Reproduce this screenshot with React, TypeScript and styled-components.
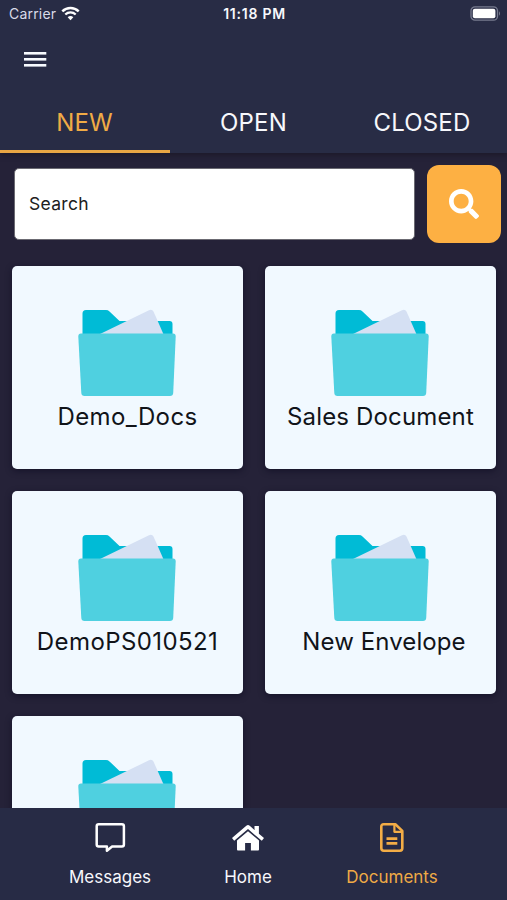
import React from "react";
import styled, { createGlobalStyle } from "styled-components";
import { FaSearch } from "react-icons/fa";

const accent = "#fdb043";

const GlobalStyle = createGlobalStyle`
  * { box-sizing: border-box; }
  body { margin: 0; background: #252238; }
  button { font: inherit; border: 0; background: none; padding: 0; }
`;

const Screen = styled.div`
  display: flex;
  flex-direction: column;
  width: 507px;
  height: 900px;
  overflow: hidden;
  background: #252238;
  color: #f7f8fc;
  font-family: Inter, "Liberation Sans", sans-serif;
`;

const Header = styled.header`
  flex: none;
  height: 152.5px;
  display: flex;
  flex-direction: column;
  background: #282c45;
  box-shadow: 0 2px 5px rgba(24, 22, 34, 0.7);
`;

const StatusBar = styled.div`
  display: grid;
  grid-template-columns: 1fr auto 1fr;
  align-items: center;
  height: 28px;
  padding: 0 6px 0 9px;
  font-size: 14px;
`;

const Carrier = styled.div`
  display: flex;
  align-items: center;
  gap: 5px;
  color: #d9dbe8;
  letter-spacing: 0.2px;
`;

const Clock = styled.div`
  margin-right: 1px;
  font-size: 14px;
  font-weight: 600;
  letter-spacing: 0.75px;
`;

const BatterySlot = styled.div`
  display: flex;
  justify-content: flex-end;
`;

const MenuBar = styled.div`
  display: flex;
  align-items: center;
  height: 64px;
  padding-left: 24px;
`;

const MenuButton = styled.button`
  display: flex;
`;

const Tabs = styled.nav`
  display: grid;
  grid-template-columns: 170px 168px 169px;
  height: 61px;
`;

const Tab = styled.button<{ $active?: boolean }>`
  height: 61px;
  padding: 4px 1px 0 0;
  font-size: 24px;
  line-height: 29px;
  letter-spacing: 0.15px;
  color: ${(p) => (p.$active ? "#f0ab45" : "#f7f8fc")};
  border-bottom: 3px solid ${(p) => (p.$active ? "#e9a644" : "transparent")};
`;

const SearchRow = styled.div`
  flex: none;
  display: flex;
  align-items: center;
  gap: 12px;
  padding: 12px 6px 0 14px;
`;

const SearchField = styled.input`
  width: 401px;
  height: 72px;
  padding: 0 14px;
  border: 1px solid #6b6a72;
  border-radius: 5px;
  background: #fff;
  font: 17.5px Inter, "Liberation Sans", sans-serif;
  letter-spacing: 0.3px;
  &::placeholder { color: #202020; opacity: 1; }
`;

const SearchButton = styled.button`
  display: flex;
  align-items: center;
  justify-content: center;
  width: 74px;
  height: 78.5px;
  border-radius: 12px;
  background: ${accent};
  color: #fff;
  font-size: 30px;
`;

const Grid = styled.main`
  flex: 1;
  min-height: 0;
  overflow: hidden;
  display: grid;
  grid-template-columns: 231px 231px;
  grid-auto-rows: 203px;
  gap: 22px;
  align-content: start;
  padding: 23px 0 0 12px;
`;

const Card = styled.article`
  display: flex;
  flex-direction: column;
  align-items: center;
  padding-top: 43px;
  border-radius: 5px;
  background: #f1f9ff;
  box-shadow: 0 2px 6px rgba(14, 12, 34, 0.65);
  > svg { margin-right: 1px; }
`;

const CardName = styled.div<{ $spacing: number; $shift?: number }>`
  margin-top: 5px;
  padding-left: ${(p) => p.$shift ?? 0}px;
  color: #111419;
  font-size: 24px;
  line-height: 29px;
  letter-spacing: ${(p) => p.$spacing}px;
  white-space: nowrap;
`;

const BottomBar = styled.nav`
  flex: none;
  display: grid;
  grid-template-columns: 138px 138px 150px;
  height: 92px;
  padding-left: 41px;
  background: #272b45;
`;

const BottomItem = styled.button<{ $active?: boolean }>`
  display: flex;
  flex-direction: column;
  align-items: center;
  padding-top: 14px;
  gap: 14px;
  color: ${(p) => (p.$active ? "#efaa45" : "#f7f8fc")};
  font-size: 17px;
  line-height: 21px;
  svg { color: ${(p) => (p.$active ? "#f3ad46" : "#fff")}; }
`;

const WifiIcon = () => (
  <svg width="19" height="15" viewBox="0 0 19 15" fill="none" stroke="#fff">
    <path d="M1.3 5.4C6 .9 13 .9 17.7 5.4" strokeWidth="2.5" />
    <path d="M4.3 8.5c3-2.8 7.4-2.8 10.4 0" strokeWidth="2.3" />
    <path d="M9.5 14.2 6.7 11.2c1.5-1.5 4.1-1.5 5.6 0z" fill="#fff" stroke="none" />
  </svg>
);

const BatteryIcon = () => (
  <svg width="31" height="15" viewBox="0 0 31 15">
    <rect x="1" y=".8" width="26.5" height="13.4" rx="4" fill="none" stroke="#777b8f" strokeWidth="1.3" />
    <rect x="2.8" y="2.7" width="22.6" height="9.6" rx="2" fill="#fff" />
    <path d="M29 5.2q2 2.2 0 4.6z" fill="#777b8f" />
  </svg>
);

const MenuIcon = () => (
  <svg width="23" height="17" viewBox="0 0 23 17" fill="#f8fbff">
    <rect y="1" width="22.3" height="2.6" />
    <rect y="7" width="22.3" height="2.6" />
    <rect y="13" width="22.3" height="2.6" />
  </svg>
);

const FolderIcon = () => (
  <svg width="98" height="88" viewBox="0 0 98 88">
    <path d="M4.5 26V4.5Q4.5 1 8 1h20q2 0 3.5 1.4L41.5 12H91.5q3 0 3 3v12h-90z" fill="#00bbd6" />
    <path d="M22 25 71 1.3q3-1.4 4.6 1.5L86.3 27H22z" fill="#d5e0f3" />
    <path d="M.3 27.4Q.2 24.5 3 24.5h92q2.8 0 2.7 2.9L95.2 84q-.2 3-3.2 3H6.5q-3 0-3.2-3z" fill="#4fd0e0" />
  </svg>
);

const MessageIcon = () => (
  <svg width="31" height="31" viewBox="0 0 31 31" fill="none" stroke="currentColor" strokeWidth="2.5" strokeLinejoin="round">
    <path d="M3.7 2.3h23.2q2 0 2 2v18.2q0 2-2 2H17.1l-5.2 4.3v-4.3H3.7q-2 0-2-2V4.3q0-2 2-2z" />
  </svg>
);

const HomeIcon = () => (
  <svg width="34" height="31" viewBox="0 0 34 31" fill="currentColor">
    <path d="M1 16.1 15.3 3.7q1.7-1.4 3.4 0L23.5 8V4h4.4v7.7l5.1 4.4-2.2 2.7L17 7.1 3.2 18.8z" />
    <path d="m17 9.3 11 9.3v9q0 .9-.9.9h-7.2V21h-5.8v7.5H6.9q-.9 0-.9-.9v-9z" />
  </svg>
);

const DocumentIcon = () => (
  <svg width="24" height="31" viewBox="0 0 24 31" fill="none" stroke="currentColor" strokeWidth="2.6" strokeLinejoin="round">
    <path d="M3.7 2.3h11.6l7 6.6v17.4q0 2.4-2.4 2.4H3.7q-2.4 0-2.4-2.4V4.7q0-2.4 2.4-2.4z" />
    <path d="M14.4 2.8v7h7.2" strokeWidth="2.2" />
    <path d="M6.5 16.6h10.8M6.5 21.4h10.8" strokeWidth="2.9" />
  </svg>
);

const folders = [
  { name: "Demo_Docs", spacing: 0.4 },
  { name: "Sales Document", spacing: 0.15 },
  { name: "DemoPS010521", spacing: 0.4 },
  { name: "New Envelope", spacing: 0.1, shift: 7 },
  { name: "", spacing: 0 },
];

export default function App() {
  return (
    <>
      <GlobalStyle />
      <Screen>
        <Header>
          <StatusBar>
            <Carrier>Carrier <WifiIcon /></Carrier>
            <Clock>11:18 PM</Clock>
            <BatterySlot><BatteryIcon /></BatterySlot>
          </StatusBar>
          <MenuBar>
            <MenuButton aria-label="Menu"><MenuIcon /></MenuButton>
          </MenuBar>
          <Tabs>
            <Tab $active>NEW</Tab>
            <Tab>OPEN</Tab>
            <Tab>CLOSED</Tab>
          </Tabs>
        </Header>
        <SearchRow>
          <SearchField placeholder="Search" />
          <SearchButton aria-label="Search"><FaSearch /></SearchButton>
        </SearchRow>
        <Grid>
          {folders.map((f, i) => (
            <Card key={i}>
              <FolderIcon />
              {f.name && <CardName $spacing={f.spacing} $shift={f.shift}>{f.name}</CardName>}
            </Card>
          ))}
        </Grid>
        <BottomBar>
          <BottomItem><MessageIcon />Messages</BottomItem>
          <BottomItem><HomeIcon />Home</BottomItem>
          <BottomItem $active><DocumentIcon />Documents</BottomItem>
        </BottomBar>
      </Screen>
    </>
  );
}
